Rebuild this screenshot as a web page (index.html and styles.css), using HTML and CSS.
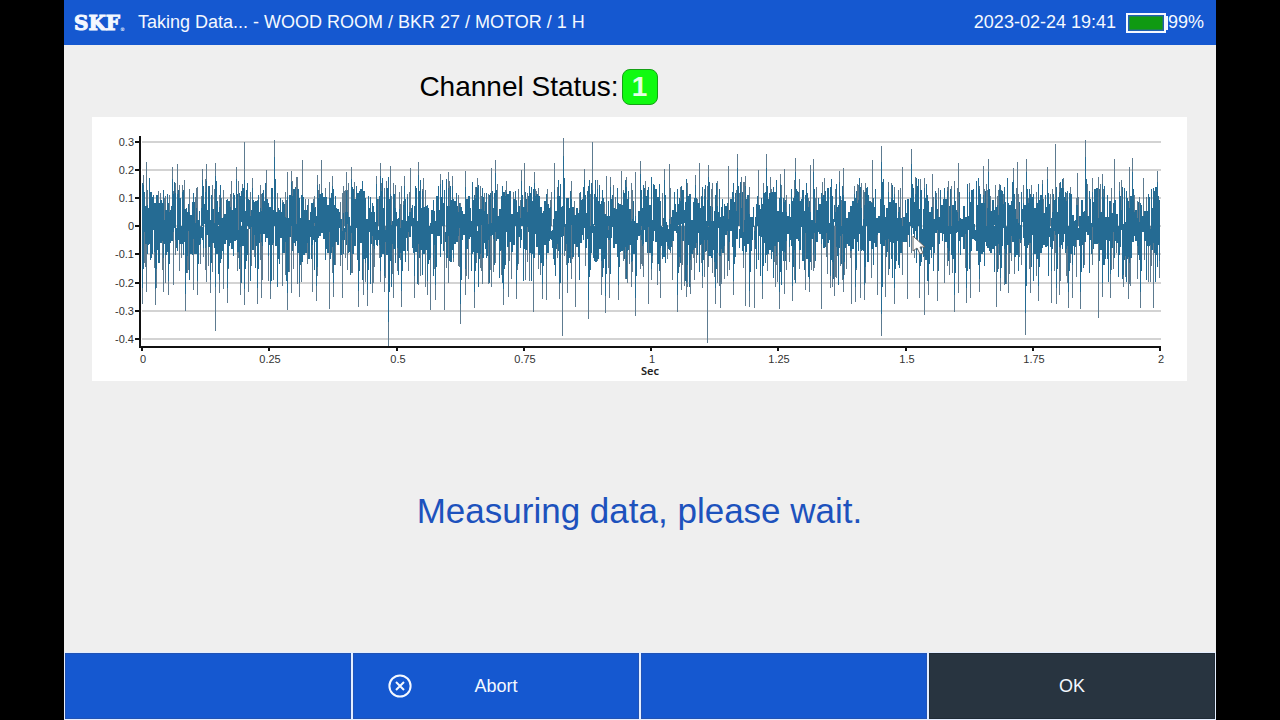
FILE: index.html
```html
<!DOCTYPE html>
<html lang="en">
<head>
  <meta charset="UTF-8">
  <meta name="viewport" content="width=device-width, initial-scale=1.0">
  <title>Taking Data</title>
  <link rel="stylesheet" href="styles.css">
</head>
<body>
  <div class="screen">
    <header class="topbar">
      <div class="logo">SKF<span class="reg">®</span></div>
      <div class="title">Taking Data... - WOOD ROOM / BKR 27 / MOTOR / 1 H</div>
      <div class="clock">2023-02-24 19:41</div>
      <svg class="battery" width="42" height="20" viewBox="0 0 42 20">
        <rect x="1" y="1" width="38" height="18" fill="none" stroke="#f4f8ff" stroke-width="2"/>
        <rect x="3" y="3" width="34" height="14" fill="#0f9a12" stroke="#2a6a8c"/>
        <rect x="40" y="3" width="2" height="14" fill="#f4f8ff"/>
      </svg>
      <div class="percent">99%</div>
    </header>

    <main class="content">
      <div class="status">
        <span>Channel Status:</span>
        <span class="badge">1</span>
      </div>

      <svg class="chart" viewBox="0 0 1095 264">
        <g id="grid" class="grid"></g>
        <path id="spikes" class="spikes"/>
        <path id="wave" class="wave"/>
        <path class="axis" d="M48 19V230H1069"/>
        <g id="ticks" class="ticks"></g>
        <text class="unit" x="558" y="258">Sec</text>
        <path class="pointer" d="M821 119V134L825 131L828 137L831 136L828 130H833Z"/>
      </svg>

      <p class="message">Measuring data, please wait.</p>
    </main>

    <footer class="keys">
      <button class="key" type="button"></button>
      <button class="key" type="button">
        <svg class="key-icon" width="24" height="24" viewBox="0 0 24 24">
          <circle cx="12" cy="12" r="10.6"/>
          <path d="M8 8L16 16M16 8L8 16"/>
        </svg>
        <span class="key-label">Abort</span>
      </button>
      <button class="key" type="button"></button>
      <button class="key dark" type="button"><span class="key-label">OK</span></button>
    </footer>
  </div>

  <script src="chart.js"></script>
</body>
</html>
```

FILE: styles.css
```css
* {
  box-sizing: border-box;
}
body {
  margin: 0;
  background: #000;
  font-family: "Liberation Sans", Arial, sans-serif;
}
.screen {
  display: flex;
  flex-direction: column;
  min-height: 100vh;
  margin: 0 5%;
  background: #efefef;
}
.topbar {
  display: flex;
  align-items: center;
  height: 45px;
  padding: 0 12px 0 10px;
  background: #1558d0;
  color: #f4f8ff;
  font-size: 18px;
}
.logo {
  display: flex;
  align-items: flex-end;
  width: 64px;
  font-family: "DejaVu Serif", serif;
  font-size: 20px;
  font-weight: bold;
  line-height: 20px;
  -webkit-text-stroke: 1px #f4f8ff;
}
.reg {
  font-size: 5px;
  line-height: 8px;
  -webkit-text-stroke: 0;
}
.title {
  flex: 1;
}
.battery {
  margin-left: 10px;
}
.content {
  flex: 1;
  display: flex;
  flex-direction: column;
  padding: 0 29px 0 28px;
}
.status {
  display: flex;
  align-items: center;
  justify-content: center;
  gap: 3px;
  height: 72px;
  padding: 12px 202px 0 0;
  font-size: 28px;
}
.badge {
  width: 36px;
  height: 36px;
  border: 1px solid #16a016;
  border-radius: 8px;
  background: #10fa10;
  color: #e4ffe4;
  font-weight: bold;
  line-height: 34px;
  text-align: center;
}
.chart {
  display: block;
  width: 100%;
  background: #fff;
}
.grid {
  stroke: #d3d3d3;
  stroke-width: 2;
}
.spikes {
  fill: none;
  stroke: #5d7b90;
  shape-rendering: crispEdges;
}
.wave {
  fill: none;
  stroke: #256b93;
  shape-rendering: crispEdges;
}
.axis {
  fill: none;
  stroke: #111;
  stroke-width: 2;
}
.ticks path {
  stroke: #111;
  stroke-width: 2;
}
.ticks text {
  fill: #333;
  font-size: 11px;
}
.ticks .x {
  text-anchor: middle;
}
.ticks .y {
  text-anchor: end;
}
.unit {
  fill: #222;
  font-family: "Noto Sans", sans-serif;
  font-size: 11px;
  font-weight: 600;
  text-anchor: middle;
}
.pointer {
  fill: #fff;
  stroke: #666;
}
.message {
  flex: 1;
  display: flex;
  align-items: center;
  justify-content: center;
  margin: 0;
  padding-bottom: 12px;
  color: #1d52bd;
  font-size: 35px;
}
.keys {
  display: grid;
  grid-template-columns: repeat(4, 1fr);
  gap: 2px;
  height: 68px;
  padding: 1px;
  background: #e4eeff;
}
.key {
  display: grid;
  grid-template-columns: 1fr auto 1fr;
  align-items: center;
  padding: 0 34px;
  border: 1px solid #2153b4;
  background: #1558d0;
  color: #f4f8ff;
  font-family: inherit;
  font-size: 18px;
}
.key.dark {
  border-color: #202b36;
  background: #283440;
}
.key-icon {
  fill: none;
  stroke: #f4f8ff;
  stroke-width: 2;
}
.key-label {
  grid-column: 2;
}
```

FILE: chart.js
```js
// peaks above and below the dense band, as x, y pairs in chart units
const highs = [
  51,58, 54,45, 80,50, 85,47, 110,52, 114,47, 123,46, 139,64, 144,50, 152,25, 160,61, 174,53, 182,23,
  195,55, 199,54, 210,43, 225,58, 229,43, 240,59, 254,55, 259,50, 284,59, 288,46, 298,49, 312,59,
  318,51, 326,45, 331,61, 348,57, 356,55, 360,59, 373,54, 385,61, 399,51, 403,43, 414,64, 429,53,
  432,46, 442,55, 462,46, 471,21, 479,64, 492,52, 500,25, 505,63, 514,59, 518,60, 529,54, 534,60,
  543,55, 548,44, 559,65, 572,52, 577,47, 603,58, 607,46, 616,48, 636,49, 645,37, 649,60, 653,59,
  666,53, 674,37, 678,60, 688,57, 692,52, 703,41, 718,48, 721,42, 732,61, 747,54, 751,51, 762,69,
  780,43, 789,29, 810,50, 819,32, 823,60, 832,61, 840,57, 862,64, 866,46, 877,66, 891,49, 896,42,
  907,67, 921,51, 925,45, 934,42, 950,63, 955,50, 963,27, 971,61, 985,56, 993,23, 1006,60, 1010,57,
  1022,42, 1027,65, 1037,50, 1040,41, 1051,61, 1065,54
];
const lows = [
  50,187, 54,175, 63,188, 71,175, 76,178, 81,168, 93,194, 101,173, 105,178, 114,165, 118,176,
  123,214, 127,176, 131,172, 135,186, 148,178, 152,188, 156,175, 165,187, 169,181, 178,182,
  190,169, 195,193, 199,176, 207,180, 220,175, 224,184, 237,192, 241,180, 250,181, 266,190,
  271,178, 275,189, 280,176, 288,165, 292,175, 296,229, 301,181, 309,190, 322,181, 335,178,
  338,193, 343,183, 352,193, 368,207, 373,178, 382,191, 399,170, 411,188, 416,180, 424,182,
  441,195, 450,182, 454,183, 467,182, 470,219, 475,176, 483,190, 496,202, 509,178, 513,196,
  517,181, 526,183, 539,170, 543,199, 556,187, 559,163, 568,181, 585,195, 589,173, 594,180,
  598,177, 610,171, 615,226, 623,187, 628,191, 641,178, 653,189, 657,190, 662,191, 670,182,
  683,170, 687,192, 692,177, 700,184, 713,173, 717,175, 729,192, 738,171, 742,179, 751,175,
  759,187, 763,185, 768,181, 772,183, 785,178, 789,219, 793,180, 802,187, 815,182, 827,181,
  832,198, 836,178, 845,184, 862,195, 866,176, 874,186, 878,181, 887,175, 904,190, 908,174,
  916,176, 933,218, 938,176, 946,184, 959,186, 964,187, 967,178, 976,191, 980,181, 988,192,
  1006,201, 1010,180, 1018,181, 1031,170, 1036,182, 1048,191, 1061,191
];

const zero = 109;

// small repeatable generator, keeps the trace the same on each load
let seed = 27;
function rnd() {
  seed = (seed * 16807) % 2147483647;
  return seed / 2147483647;
}

let band = "";
let thin = "";

// dense band, drawn in columns one or two units wide, with notches cut
// from above or from below
let x = 50;
while (x < 1068) {
  const beat = 0.5 + 0.5 * Math.cos((x - 58) * 2 * Math.PI / 29.5);
  const beatLow = 0.5 + 0.5 * Math.cos((x - 64) * 2 * Math.PI / 29.5);
  let up = 14 + beat * 15 + (rnd() - 0.5) * 24;
  let down = 15 + beatLow * 12 + (rnd() - 0.5) * 22;
  const cut = rnd();
  let width = rnd() < 0.5 ? 2 : 1;
  if (cut < 0.14) {
    up = rnd() * 16 - 6;
    down = Math.max(down, 14);
    width = 1;
  } else if (cut < 0.28) {
    down = rnd() * 14 - 4;
    up = Math.max(up, 14);
    width = 1;
  }
  for (let i = 0; i < width; i++) {
    band += `M${x + i + 0.5} ${zero - up}V${zero + down}`;
  }

  if (rnd() < 0.5) {
    const tip = zero - 22 - beat * 10 - rnd() * 18;
    thin += `M${x + 0.5} ${zero}V${tip}`;
    if (rnd() < 0.4) band += `M${x + 0.5} ${zero}V${tip}`;
  }
  if (rnd() < 0.5) {
    const tip = zero + 26 + beatLow * 6 + rnd() * 30;
    thin += `M${x + 0.5} ${zero}V${tip}`;
    if (rnd() < 0.4) band += `M${x + 0.5} ${zero}V${tip}`;
  }
  x += width;
}

function addPeaks(list) {
  for (let i = 0; i < list.length; i += 2) {
    const px = list[i] + 0.5;
    const y = list[i + 1];
    thin += `M${px} ${zero}V${y}`;
    // every other peak has a wider, darker foot
    if (i % 4 === 0) {
      band += `M${px} ${zero}V${zero + (y - zero) * 0.8}`;
      band += `M${px + 1} ${zero}V${zero + (y - zero) * 0.55}`;
    }
  }
}
addPeaks(highs);
addPeaks(lows);

document.getElementById("wave").setAttribute("d", band);
document.getElementById("spikes").setAttribute("d", thin);

let grid = "";
let ticks = "";
["0.3", "0.2", "0.1", "0", "-0.1", "-0.2", "-0.3", "-0.4"].forEach((label, i) => {
  const y = Math.round(24.6 + i * 28.2);
  grid += `<path d="M50 ${y}H1069"/>`;
  ticks += `<path d="M43 ${y}H48"/><text class="y" x="42" y="${y + 4}">${label}</text>`;
});
["0", "0.25", "0.5", "0.75", "1", "1.25", "1.5", "1.75", "2"].forEach((label, i) => {
  const tx = Math.round(50 + i * 127.25);
  ticks += `<path d="M${tx} 230V234"/><text class="x" x="${tx + 1}" y="246">${label}</text>`;
});
document.getElementById("grid").innerHTML = grid;
document.getElementById("ticks").innerHTML = ticks;
```
